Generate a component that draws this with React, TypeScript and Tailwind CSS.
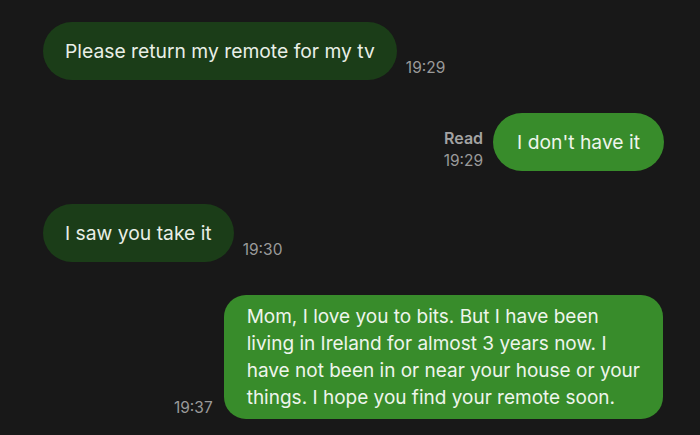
const font = { fontFamily: "Inter, Roboto, 'Noto Sans', sans-serif" }

function Time({ children }: { children: React.ReactNode }) {
  return <span className="text-[15.5px] leading-[18px] text-[#9a9a9a]">{children}</span>
}

function Incoming({ text, time }: { text: string; time: string }) {
  return (
    <div className="flex items-end gap-[9px] pl-[43px]">
      <div className="flex h-[58px] items-center rounded-full bg-[#1b3d18] px-[22px] text-[19.3px] text-[#e9efe7]">
        {text}
      </div>
      <div className="pb-[1px]">
        <Time>{time}</Time>
      </div>
    </div>
  )
}

export default function App() {
  return (
    <div className="h-[435px] w-[700px] overflow-hidden bg-[#181818] pt-[22px]" style={font}>
      <div className="flex flex-col gap-[33px]">
        <Incoming text="Please return my remote for my tv" time="19:29" />

        <div className="flex items-end justify-end gap-[10px] pr-[36px]">
          <div className="flex flex-col items-end pb-[1px]">
            <span className="mb-[5px] text-[16px] font-semibold leading-[18px] text-[#a3a3a3]">Read</span>
            <Time>19:29</Time>
          </div>
          <div className="flex h-[58px] items-center rounded-full bg-[#388c2b] px-[24px] text-[19.3px] text-[#eef5ec]">
            I don't have it
          </div>
        </div>

        <Incoming text="I saw you take it" time="19:30" />

        <div className="flex items-end justify-end gap-[11px] pr-[37px]">
          <div className="pb-0">
            <Time>19:37</Time>
          </div>
          <div className="rounded-[22px] bg-[#388c2b] px-[23px] py-[8px] text-[19px] leading-[27px] text-[#eef5ec]">
            Mom, I love you to bits. But I have been
            <br />
            living in Ireland for almost 3 years now. I
            <br />
            have not been in or near your house or your
            <br />
            things. I hope you find your remote soon.
          </div>
        </div>
      </div>
    </div>
  )
}
